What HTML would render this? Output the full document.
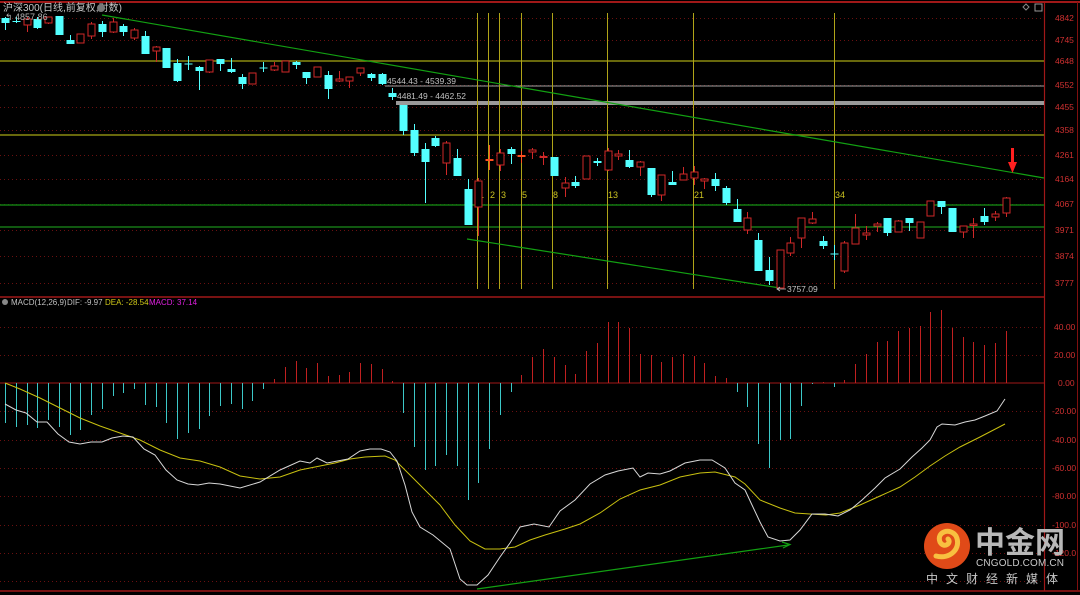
<!DOCTYPE html>
<html><head><meta charset="utf-8"><style>
html,body{margin:0;padding:0;background:#000;width:1080px;height:595px;overflow:hidden}
svg{display:block}
text{font-family:"Liberation Sans","Noto Sans CJK SC",sans-serif}
</style></head><body>
<svg id="s" width="1080" height="595" xmlns="http://www.w3.org/2000/svg">
<rect width="1080" height="595" fill="#000"/>
<g id="grid"></g>
<line x1="0" y1="2" x2="1080" y2="2" stroke="#a01818" stroke-width="2"/>
<line x1="0" y1="297" x2="1044" y2="297" stroke="#a01818" stroke-width="1.5"/>
<line x1="0" y1="591" x2="1080" y2="591" stroke="#a01818" stroke-width="1.5"/>
<line x1="1044.5" y1="2" x2="1044.5" y2="591" stroke="#a01818" stroke-width="1.2"/>
<line x1="1077.5" y1="2" x2="1077.5" y2="591" stroke="#801010" stroke-width="1"/>
<line x1="0" y1="383" x2="1044" y2="383" stroke="#a01818" stroke-width="1"/>
<line x1="0" y1="61" x2="1044" y2="61" stroke="#8a8a10" stroke-width="1.5"/>
<line x1="0" y1="135" x2="1044" y2="135" stroke="#8a8a10" stroke-width="1.5"/>
<line x1="385" y1="86" x2="1044" y2="86" stroke="#a0a0a0" stroke-width="1"/>
<line x1="396" y1="103" x2="1044" y2="103" stroke="#9a9a9a" stroke-width="4"/>
<line x1="0" y1="205" x2="1044" y2="205" stroke="#107a10" stroke-width="1.5"/>
<line x1="0" y1="227" x2="1044" y2="227" stroke="#20b020" stroke-width="1"/>
<g stroke="#b0a418" stroke-width="1">
<line x1="477.5" y1="13" x2="477.5" y2="289"/><line x1="488.5" y1="13" x2="488.5" y2="289"/>
<line x1="499.5" y1="13" x2="499.5" y2="289"/><line x1="521.5" y1="13" x2="521.5" y2="289"/>
<line x1="552.5" y1="13" x2="552.5" y2="289"/><line x1="607.5" y1="13" x2="607.5" y2="289"/>
<line x1="693.5" y1="13" x2="693.5" y2="289"/><line x1="834.5" y1="13" x2="834.5" y2="289"/>
</g>
<g fill="#c8c020" font-size="9">
<text x="479" y="198">1</text><text x="490" y="198">2</text><text x="501" y="198">3</text>
<text x="522" y="198">5</text><text x="553" y="198">8</text><text x="608" y="198">13</text>
<text x="694" y="198">21</text><text x="835" y="198">34</text>
</g>
<line x1="102" y1="15" x2="1044" y2="178" stroke="#12a012" stroke-width="1.2"/>
<line x1="467" y1="239" x2="780" y2="288" stroke="#12a012" stroke-width="1.2"/>
<line x1="477" y1="589" x2="788" y2="545" stroke="#12a012" stroke-width="1.2"/>
<path d="M782,542 L790,544.5 L783,548" fill="none" stroke="#12a012" stroke-width="1.2"/>
<g id="candles"></g>
<g id="macd"></g>
<g fill="#c0c0c0" font-size="8.5">
<text x="387" y="84">4544.43 - 4539.39</text>
<text x="397" y="99">4481.49 - 4462.52</text>
<text x="787" y="292">3757.09</text>
</g>
<path d="M777,289 H786 M780,287 L777,289 L780,291" stroke="#c0c0c0" fill="none" stroke-width="0.8"/>
<text x="3" y="11" fill="#c8c8c8" font-size="10">沪深300(日线,前复权,对数)</text>
<circle cx="101" cy="8" r="4" fill="#777"/>
<text x="5" y="20" fill="#b0b0b0" font-size="9">↰ 4857.86</text>
<path d="M1026,4 L1029,7 L1026,10 L1023,7Z" fill="none" stroke="#888"/>
<rect x="1035" y="4" width="7" height="7" fill="none" stroke="#999"/>
<path d="M1011,148 h3 v14 h3 l-4.5,11 l-4.5,-11 h3z" fill="#ff2020"/>
<g fill="#d03030" font-size="8.5">
<text x="1055" y="21">4842</text><text x="1055" y="43">4745</text><text x="1055" y="64">4648</text>
<text x="1055" y="88">4552</text><text x="1055" y="110">4455</text><text x="1055" y="133">4358</text>
<text x="1055" y="158">4261</text><text x="1055" y="182">4164</text><text x="1055" y="207">4067</text>
<text x="1055" y="233">3971</text><text x="1055" y="259">3874</text><text x="1055" y="286">3777</text>
<text x="1054" y="330">40.00</text><text x="1054" y="358">20.00</text><text x="1058" y="386">0.00</text>
<text x="1052" y="414">-20.00</text><text x="1052" y="443">-40.00</text><text x="1052" y="471">-60.00</text>
<text x="1052" y="499">-80.00</text><text x="1052" y="528">-100.0</text><text x="1052" y="556">-120.0</text>
</g>
<circle cx="5" cy="302" r="3" fill="#888"/>
<text x="11" y="305" font-size="8" fill="#c0c0c0">MACD(12,26,9)</text>
<text x="67" y="305" font-size="8" fill="#c0c0c0">DIF: -9.97</text>
<text x="105" y="305" font-size="8" fill="#d0c818">DEA: -28.54</text>
<text x="149" y="305" font-size="8" fill="#e020e0">MACD: 37.14</text>
<circle cx="947" cy="546" r="23" fill="#e04a18"/>
<path d="M936,556 C950,560 962,548 956,536 C950,527 936,532 940,542 C944,549 952,543 948,539" fill="none" stroke="#f8c040" stroke-width="5" stroke-linecap="round"/>
<text x="975" y="553" font-size="30" font-weight="bold" fill="#b8b8b8" font-family="'Noto Sans CJK SC',sans-serif">中金网</text>
<text x="976" y="566" font-size="10" fill="#c8c8c8" textLength="88">CNGOLD.COM.CN</text>
<text x="926" y="583" font-size="12" fill="#c8c8c8" letter-spacing="8" font-family="'Noto Sans CJK SC',sans-serif">中文财经新媒体</text>
</svg>
<script>
var NS="http://www.w3.org/2000/svg";
function el(p,t,a){var e=document.createElementNS(NS,t);for(var k in a)e.setAttribute(k,a[k]);p.appendChild(e);return e;}
var G=document.getElementById('grid');
[18,40,85,107,130,155,179,204,230,256,283,327,355,411,440,468,496,525,553,581].forEach(function(y){
 el(G,'line',{x1:0,y1:y+.5,x2:1044,y2:y+.5,stroke:'#6a1010','stroke-dasharray':'1,3'});
});
var C=[['c',18,23,17,30],['c',21,22,17,23],['r',19,25,17,32],['c',19,28,17,29],['r',17,23,17,24],['c',16,35,16,35],
['c',40,44,35,44],['r',34,43,34,43],['r',24,36,22,39],['c',24,32,21,37],['r',22,32,18,33],['c',26,32,24,36],
['r',30,38,28,40],['c',36,54,31,54],['r',47,51,46,62],['c',48,68,48,68],['c',63,81,59,82],['c',63.5,64.5,56,70],
['c',67,71,66,90],['r',60,72,60,73],['c',59,64,59,71],['c',69,72,58,73],['c',77,84,74,89],['r',73,84,73,84],
['c',67.5,68.5,62,72],['r',66,70,62,71],['r',61,72,61,72],['c',62,65,61,69],['c',72,78,72,84],['r',67,77,67,77],
['c',75,89,71,99],['r',79,81,71,82],['r',77,81,77,88],['r',68,73,68,76],['c',74,78,73,81],['c',74,84,73,85],
['c',93,97,88,100],['c',105,131,105,135],['c',130,153,124,156],['c',149,162,143,203],['c',138,146,136,147],
['r',143,163,141,175],['c',158,176,149,176],['c',189,225,179,225],['r',181,207,178,236],['o',159.5,160.5,145,170],
['r',153,165,149,171],['c',149,154,147,164],['o',155.5,156.5,151,163],['r',150,152,148,159],['r',156.5,157.5,152,165],
['c',157,176,157,176],['r',183,188,177,197],['c',182,186,176,188],['r',156,179,156,179],['c',161,163,158,166],
['r',151,170,148,171],['r',154,156,150,160],['c',160,167,150,168],['r',162,167,161,176],['c',168,195,168,197],
['r',175,195,175,201],['c',182,185,171,185],['r',174,180,167,180],['r',172,178,166,185],['r',179,181,178,189],
['c',179,186,173,191],['c',188,203,186,205],['c',209,222,199,222],['r',218,230,212,234],['c',240,271,233,271],
['c',270,281,257,285],['r',250,288,250,288],['r',243,253,237,256],['r',218,238,218,248],['r',219,223,212,224],
['c',241,246,236,249],['c',253.5,254.5,245,260],['r',243,271,241,273],['r',228,244,214,244],['r',233,235,226,240],
['r',224,226,222,232],['c',218,233,218,236],['r',221,232,220,232],['c',218,223,218,231],['r',222,238,222,238],
['r',201,216,201,216],['c',201,207,201,214],['c',208,232,208,232],['r',226,232,226,238],['r',224,225.5,218,238],
['c',216,222,208,225],['r',214,217,211,221],['r',198,213,197,217]];
var CG=document.getElementById('candles');
C.forEach(function(d,i){
 var x=Math.round(5+10.76*i)+.5;
 var col=d[0]=='c'?'#54ffff':(d[0]=='o'?'#ff5020':'#d02828');
 el(CG,'line',{x1:x,y1:d[3],x2:x,y2:d[4],stroke:col});
 if(d[0]=='c') el(CG,'rect',{x:x-4,y:d[1],width:8,height:Math.max(1,d[2]-d[1]),fill:col});
 else el(CG,'rect',{x:x-3.5,y:d[1],width:7,height:Math.max(1,d[2]-d[1]),fill:'#000',stroke:col});
});
var H=[423,427,425,428,420,427,435,430,415,409,396,393,389,405,407,423,439,433,429,416,406,404,409,401,389,379,367,361,
368,363,376,375,372,363,364,369,381,413,447,470,466,455,466,500,483,449,415,392,375,357,349,357,365,374,351,343,322,322,
328,354,355,362,357,354,356,363,376,378,392,407,444,468,440,439,406,384,382,387,380,364,354,342,341,331,328,326,312,310,
328,337,342,345,343,331];
var M=document.getElementById('macd');
H.forEach(function(y,i){
 var x=Math.round(5+10.76*i)+.5;
 el(M,'line',{x1:x,y1:383,x2:x,y2:y,stroke:y>383?'#3cc8c8':'#c02020'});
});
var DIF="5,404 16,410 26,413 37,422 47,422 58,434 69,442 80,444 91,442 102,442 112,438 123,436 133,437 144,449 155,455 166,470 177,480 188,484 198,485 209,483 220,484 240,488 260,482 280,470 300,461 310,463 317,458 327,463 348,459 360,451 370,449 381,449 390,452 397,461 405,485 412,512 420,527 433,535 450,549 460,579 467,585 477,585 488,575 500,557 510,543 520,527 534,524 549,527 560,511 575,500 590,484 605,475 618,471 633,468 640,477 648,473 660,474 670,471 685,463 700,460 712,460 725,468 735,483 745,490 752,505 760,522 768,537 780,541 790,540 800,530 812,514 825,514 838,516 850,510 862,500 875,488 885,478 900,469 912,457 922,448 930,440 937,427 942,424 955,425 965,422 975,420 985,416 997,411 1005,399";
var DEA="5,383 20,389 40,398 60,408 80,418 100,426 120,433 140,440 160,450 180,458 200,461 220,467 240,476 260,479 280,477 300,470 320,466 335,463 350,459 365,457 385,456 395,460 410,475 425,490 440,505 455,525 470,541 485,549 500,549 515,547 530,540 545,535 565,529 580,524 600,513 620,499 640,490 660,485 680,477 700,473 715,472 735,477 745,484 760,500 780,508 795,513 810,514 826,515 840,513 860,505 880,496 900,487 915,477 930,466 945,456 960,447 980,437 1005,424";
el(M,'polyline',{points:DEA,fill:'none',stroke:'#c8c010','stroke-width':1});
el(M,'polyline',{points:DIF,fill:'none',stroke:'#d8d8d8','stroke-width':1});
</script>
</body></html>
